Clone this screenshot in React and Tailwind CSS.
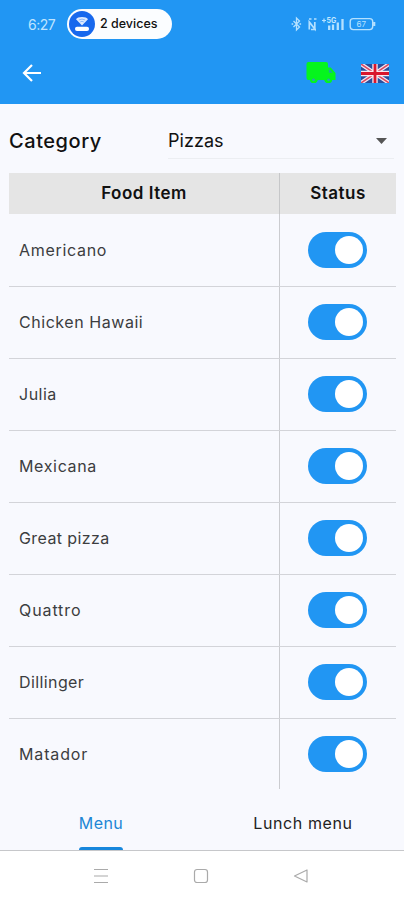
const items = [
  { name: 'Americano', tracking: 'tracking-[0.7px]' },
  { name: 'Chicken Hawaii', tracking: 'tracking-[0.55px]' },
  { name: 'Julia', tracking: 'tracking-[0.5px]' },
  { name: 'Mexicana', tracking: 'tracking-[0.65px]' },
  { name: 'Great pizza', tracking: 'tracking-[0.4px]' },
  { name: 'Quattro', tracking: 'tracking-[0.9px]' },
  { name: 'Dillinger', tracking: 'tracking-[0.4px]' },
  { name: 'Matador', tracking: 'tracking-[0.85px]' },
];

function rowHeight(index) {
  if (index === 0) return 'h-[73px] border-b';
  if (index === items.length - 1) return 'h-[70px]';
  return 'h-[72px] border-b *:pb-px';
}

function HotspotIcon() {
  return (
    <svg className="h-[26px] w-[26px]" viewBox="0 0 26 26">
      <circle cx="13" cy="13" r="13" fill="#1768ed" />
      <path d="M7 8.2Q8.5 6 13 6T19 8.2L13 14.5Z" fill="#dceaff" />
      <path d="M9.8 9Q13 7.2 16.2 9M11.2 10.9Q13 9.8 14.8 10.9" fill="none" stroke="#6fa3f5" strokeWidth="0.7" />
      <rect x="6" y="15.8" width="14" height="4.2" rx="2" fill="#fff" />
    </svg>
  );
}

function StatusIcons() {
  return (
    <svg className="h-4 w-[88px]" viewBox="0 0 88 16" fill="none" stroke="#b5e1ff" strokeWidth="1.3">
      <path d="M2.5 5l6 6-3 3V2l3 3-6 6M.6 8h1.6M8.5 8h1.6" />
      <path d="M18.3 13.5V6l5.5 7V6M18 3h2.5M23 3h2.5M20 13.5h5" strokeWidth="1.7" />
      <path d="M31 4.5h4M33 2.5v4" strokeWidth="1.2" />
      <text x="35.5" y="7" fontSize="7" fontFamily="Inter, sans-serif" fontWeight="700" fill="#c5e8ff" stroke="none">5G</text>
      <path d="M38.2 9.5V14M42 8.5V14M46.8 6.5V14M51.5 3v11" strokeWidth="2.3" />
      <rect x="59.2" y="2.6" width="22.5" height="11" rx="3" strokeWidth="1.4" />
      <path d="M83.2 6v4" strokeWidth="2.2" />
      <text x="65.5" y="11" fontSize="8" fontFamily="Inter, sans-serif" fill="#b5e1ff" stroke="none">67</text>
    </svg>
  );
}

function TruckIcon() {
  return (
    <svg className="h-[22px] w-[30px]" viewBox="0 0 30 22">
      <path d="M2.5 0H20q2 0 2 2v3.5h2.7L29.5 11v7H26a4 4 0 0 1-7.8 0H11.8A4 4 0 0 1 4 18H2.3Q.5 18 .5 16V2q0-2 2-2Z" fill="#05f51d" />
      <circle cx="7.5" cy="17.5" r="3.5" fill="#05f51d" />
      <circle cx="22.6" cy="17.5" r="3.5" fill="#05f51d" />
      <circle cx="7.5" cy="17.8" r="1.4" fill="#29a5b5" />
      <circle cx="22.6" cy="17.8" r="1.4" fill="#29a5b5" />
      <path d="M22.8 7.7h1.4l2.6 3h-4Z" fill="#1cab9c" />
    </svg>
  );
}

function FlagIcon() {
  return (
    <svg className="h-[19px] w-7" viewBox="0 0 28 19">
      <rect width="28" height="19" fill="#2a4f9d" />
      <path d="M0 0l28 19M28 0L0 19" stroke="#f3e7f2" strokeWidth="4" />
      <path d="M0 0l28 19M28 0L0 19" stroke="#dc4860" strokeWidth="1.5" />
      <path d="M14 0v19M0 9.5h28" stroke="#fae9ee" strokeWidth="5.4" />
      <path d="M14 0v19M0 9.5h28" stroke="#d9162d" strokeWidth="2.8" />
    </svg>
  );
}

function Toggle() {
  return (
    <button aria-label="Available" className="flex h-9 w-[59px] items-center justify-end rounded-full bg-[#2196f3] pr-1">
      <span className="size-7 rounded-full bg-white" />
    </button>
  );
}

export default function App() {
  return (
    <div className="flex h-[900px] w-[404px] flex-col overflow-hidden bg-[#f8f9fe] font-['Inter',sans-serif] text-[#111]">
      <header className="h-[104px] shrink-0 bg-[#2196f3]">
        <div className="flex h-12 items-center pr-[25px] pl-7">
          <span className="w-[39px] text-[14px] tracking-[-0.5px] text-[#bfe4ff]">6:27</span>
          <div className="flex h-[30px] w-[105px] items-center rounded-full bg-[#fbfdff] pl-[2px]">
            <HotspotIcon />
            <span className="ml-[5px] whitespace-nowrap text-[12.5px] font-medium">2 devices</span>
          </div>
          <div className="ml-auto"><StatusIcons /></div>
        </div>
        <div className="flex h-[50px] items-center pr-[15px] pl-[22px]">
          <svg className="h-5 w-5" viewBox="0 0 20 20" fill="none" stroke="#fff" strokeWidth="2.2">
            <path d="M19 10H2.5M10 2L2 10l8 8" />
          </svg>
          <div className="ml-auto flex items-center gap-[25px]">
            <TruckIcon />
            <FlagIcon />
          </div>
        </div>
      </header>

      <main className="h-[695px] shrink-0 px-[9px]">
        <div className="flex h-[69px] items-start">
          <h1 className="w-[159px] pt-[22px] text-[20px] leading-[30px] font-medium tracking-[0.55px]">Category</h1>
          <div className="flex h-[55px] w-[226px] items-center justify-between border-b border-[#eceef2] pt-[20px] pr-[7px]">
            <span className="text-[18px] leading-[30px] tracking-[0.05px]">Pizzas</span>
            <svg className="h-[6px] w-[11px]" viewBox="0 0 11 6"><path d="M0 0h11L5.5 6Z" fill="#555" /></svg>
          </div>
        </div>
        <div className="flex h-[41px] w-[387px] bg-[#e5e5e5] text-[17px] font-semibold">
          <div className="flex w-[271px] items-center justify-center border-r border-[#c6c7c9] tracking-[0.5px]">Food Item</div>
          <div className="flex flex-1 items-center justify-center tracking-[0.5px]">Status</div>
        </div>
        {items.map((item, index) => (
          <div key={item.name} className={`flex w-[387px] border-[#d3d4d9] ${rowHeight(index)}`}>
            <div className={`flex w-[271px] items-center border-r border-[#cbccd0] pl-[10px] text-[16px] text-[#3c3d40] ${item.tracking}`}>{item.name}</div>
            <div className="flex flex-1 items-center justify-center pr-[1px]"><Toggle /></div>
          </div>
        ))}
      </main>

      <nav className="flex h-[52px] shrink-0 border-b border-[#c6c7ca] text-[16px]">
        <button className="flex w-[202px] flex-col items-center justify-between pt-[12px] text-[#2186d5]">
          <span className="leading-6 tracking-[0.4px]">Menu</span>
          <span className="h-[3px] w-11 rounded-t-[3px] bg-[#1787dc]" />
        </button>
        <button className="flex w-[202px] justify-center pt-[12px] text-[#222]">
          <span className="leading-6 tracking-[0.6px]">Lunch menu</span>
        </button>
      </nav>
      <div className="flex h-[49px] items-center justify-center gap-[84px] bg-white pr-[2px]">
        <svg className="h-4 w-4" viewBox="0 0 16 16" fill="none" stroke="#aaa" strokeWidth="1.2"><path d="M1 1.5h14M1 8h14M1 14.5h14" /></svg>
        <svg className="h-4 w-4" viewBox="0 0 16 16" fill="none" stroke="#aaa" strokeWidth="1.2"><rect x="1.5" y="1.5" width="13" height="13" rx="2.5" /></svg>
        <svg className="h-4 w-4" viewBox="0 0 16 16" fill="none" stroke="#aaa" strokeWidth="1.2" strokeLinejoin="round"><path d="M14 2v12L1.5 8Z" /></svg>
      </div>
    </div>
  );
}
